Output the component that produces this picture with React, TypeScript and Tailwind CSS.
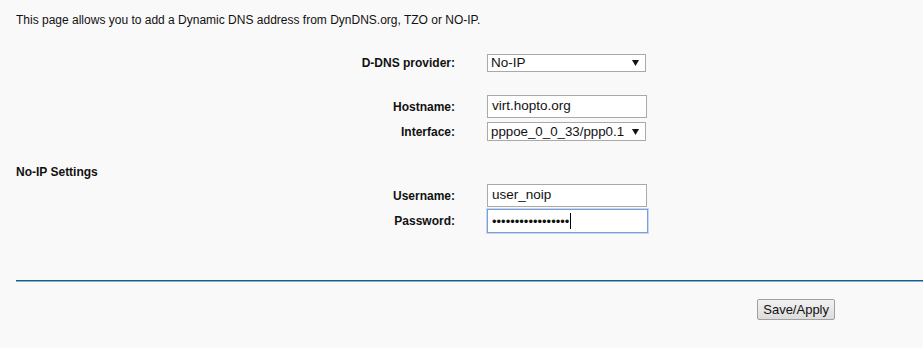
import React from "react";

function Arrow() {
  return (
    <svg width="7" height="6" viewBox="0 0 7 6" className="block">
      <polygon points="0,0 7,0 3.5,6" fill="#111" />
    </svg>
  );
}

function Label({ children }: { children: React.ReactNode }) {
  return (
    <div className="w-[439px] text-right font-bold text-[12px] text-[#111] pr-0">{children}</div>
  );
}

export default function App() {
  return (
    <div
      className="w-[923px] h-[348px] bg-[#f9f9f9] text-[#111] overflow-hidden"
      style={{ fontFamily: '"Liberation Sans", Arial, sans-serif' }}
    >
      <div className="pl-4 pt-[13px] text-[12px] leading-[14px]">
        This page allows you to add a Dynamic DNS address from DynDNS.org, TZO or NO-IP.
      </div>

      {/* D-DNS provider */}
      <div className="pl-4 mt-[27px] flex items-center h-[18px]">
        <Label>D-DNS provider:</Label>
        <div className="ml-[32px] w-[159px] h-[18px] bg-white border border-[#a9a9a9] flex items-center justify-between pl-[3px] pr-[6px] text-[13.5px]">
          <span>No-IP</span>
          <Arrow />
        </div>
      </div>

      {/* Hostname */}
      <div className="pl-4 mt-[23px] flex items-center h-[23px]">
        <Label>Hostname:</Label>
        <div className="ml-[32px] w-[160px] h-[23px] bg-white border border-[#a9a9a9] flex items-center pl-[4px] text-[13.5px]">
          virt.hopto.org
        </div>
      </div>

      {/* Interface */}
      <div className="pl-4 mt-[4px] flex items-center h-[19px]">
        <Label>Interface:</Label>
        <div className="ml-[32px] w-[159px] h-[19px] bg-white border border-[#a9a9a9] flex items-center justify-between pl-[3px] pr-[6px] text-[13.3px]">
          <span>pppoe_0_0_33/ppp0.1</span>
          <Arrow />
        </div>
      </div>

      {/* No-IP Settings */}
      <div className="pl-4 mt-[24px] font-bold text-[12px] leading-[14px]">No-IP Settings</div>

      {/* Username */}
      <div className="pl-4 mt-[5px] flex items-center h-[23px]">
        <Label>Username:</Label>
        <div className="ml-[32px] w-[160px] h-[23px] bg-white border border-[#a9a9a9] flex items-center pl-[4px] text-[13.5px]">
          user_noip
        </div>
      </div>

      {/* Password */}
      <div className="pl-4 mt-[2px] flex items-center h-[24px]">
        <Label>Password:</Label>
        <div className="ml-[32px] w-[161px] h-[24px] bg-white border border-[#7b9ed9] shadow-[0_0_0_1px_#c7d7f2] flex items-center pl-[4px] text-[13px]">
          <span className="leading-none">•••••••••••••••••</span>
          <span className="inline-block w-px h-[16px] bg-black ml-[1px]" />
        </div>
      </div>

      {/* Separator */}
      <div className="ml-4 mt-[47px] border-t border-t-[#1e5b80] border-b border-b-[#7fb0d2]" />

      {/* Button */}
      <div className="flex justify-end pr-[88px] mt-[17px]">
        <button className="h-[21px] px-[5px] border border-[#a0a0a0] rounded-[2px] bg-gradient-to-b from-[#f2f2f2] to-[#dcdcdc] text-[13px] text-[#111] leading-none">
          Save/Apply
        </button>
      </div>
    </div>
  );
}
